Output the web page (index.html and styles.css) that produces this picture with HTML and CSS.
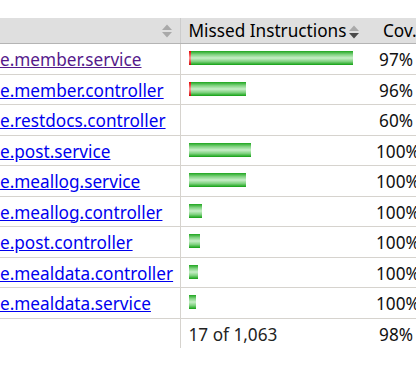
FILE: index.html
```
<!DOCTYPE html>
<html>
<head>
<meta charset="utf-8">
<link rel="stylesheet" href="styles.css">
</head>
<body>
<table class="coverage">
  <colgroup>
    <col class="c-name">
    <col class="c-bar">
    <col class="c-pct">
  </colgroup>
  <thead>
    <tr>
      <td class="h-name"><span class="h-name-inner"><svg class="sort" viewBox="0 0 10 14" width="10" height="14"><polygon points="0,6 5,0.5 10,6" fill="#a9a9a9"/><polygon points="0,8 5,13.5 10,8" fill="#a9a9a9"/></svg></span></td>
      <td class="h-bar">Missed Instructions<svg class="sort" viewBox="0 0 10 14" width="10" height="14"><polygon points="0,6 5,0.5 10,6" fill="#a9a9a9"/><polygon points="0,8 5,13.5 10,8" fill="#4a4a4a"/></svg></td>
      <td class="h-pct">Cov.</td>
    </tr>
  </thead>
  <tbody>
    <tr><td class="name"><a class="visited" href="#">e.member.service</a></td><td class="bar"><span class="red"></span><span class="green" style="width:162px"></span></td><td class="pct">97%</td></tr>
    <tr><td class="name"><a href="#">e.member.controller</a></td><td class="bar"><span class="red"></span><span class="green" style="width:55px"></span></td><td class="pct">96%</td></tr>
    <tr><td class="name"><a href="#">e.restdocs.controller</a></td><td class="bar"></td><td class="pct">60%</td></tr>
    <tr><td class="name"><a href="#">e.post.service</a></td><td class="bar"><span class="green" style="width:62px"></span></td><td class="pct">100%</td></tr>
    <tr><td class="name"><a href="#">e.meallog.service</a></td><td class="bar"><span class="green" style="width:57px"></span></td><td class="pct">100%</td></tr>
    <tr><td class="name"><a href="#">e.meallog.controller</a></td><td class="bar"><span class="green" style="width:13px"></span></td><td class="pct">100%</td></tr>
    <tr><td class="name"><a href="#">e.post.controller</a></td><td class="bar"><span class="green" style="width:11px"></span></td><td class="pct">100%</td></tr>
    <tr><td class="name"><a href="#">e.mealdata.controller</a></td><td class="bar"><span class="green" style="width:9px"></span></td><td class="pct">100%</td></tr>
    <tr><td class="name"><a href="#">e.mealdata.service</a></td><td class="bar"><span class="green" style="width:7px"></span></td><td class="pct">100%</td></tr>
  </tbody>
  <tfoot>
    <tr><td class="f-name"></td><td class="f-bar">17 of 1,063</td><td class="pct">98%</td></tr>
  </tfoot>
</table>
</body>
</html>
```
FILE: styles.css
```
html, body {
  margin: 0;
  padding: 0;
  background: #ffffff;
  overflow: hidden;
}
body {
  padding-top: 18px;
  font-family: "Noto Sans", "Liberation Sans", sans-serif;
  font-size: 17.2px;
  color: #000;
}
.coverage {
  border-collapse: collapse;
  table-layout: fixed;
  width: 470px;
}
.c-name { width: 180px; }
.c-bar { width: 196px; }
.c-pct { width: 94px; }

.coverage td {
  white-space: nowrap;
  overflow: hidden;
}
.coverage thead {
  background: #dfdfdf;
}
.coverage thead td {
  height: 25px;
  padding: 0;
  line-height: 25px;
  border-bottom: 1px solid #b4b4b4;
}
.h-name-inner {
  display: flex;
  justify-content: flex-end;
  align-items: center;
  height: 25px;
  padding-right: 8px;
}
.h-bar {
  border-left: 1px solid #cccccc;
  padding-left: 8px !important;
}
.h-bar .sort {
  vertical-align: -2px;
  margin-left: 3px;
}
.h-pct {
  padding-left: 7px !important;
}
.coverage tbody td {
  height: 27.5px;
  padding: 2px 0 0 0;
  line-height: 27.5px;
  border-bottom: 1px solid #d6d3ce;
}
.coverage tfoot td {
  height: 27px;
  padding: 2px 0 0 0;
  line-height: 27px;
}
.name a {
  color: #0000ee;
  text-decoration: underline;
}
.name a.visited {
  color: #551a8b;
}
.bar, .f-bar {
  border-left: 1px solid #d6d3ce;
  padding-left: 8px !important;
}
.bar {
  font-size: 0;
}
.coverage tbody td.bar {
  padding-top: 0;
  height: 29.5px;
  line-height: 29.5px;
}
.f-bar {
  color: #222;
}
.bar span {
  display: inline-block;
  height: 14px;
  vertical-align: middle;
}
.red {
  width: 2px;
  background: linear-gradient(#e00000, #ff8a8a 45%, #ff8a8a 55%, #d00000);
}
.green {
  background: linear-gradient(#1ea51e 0%, #7fd27f 25%, #c8eec8 50%, #7fd27f 75%, #12a012 100%);
}
.pct {
  text-align: right;
  padding-right: 57px !important;
  color: #111;
}
```
